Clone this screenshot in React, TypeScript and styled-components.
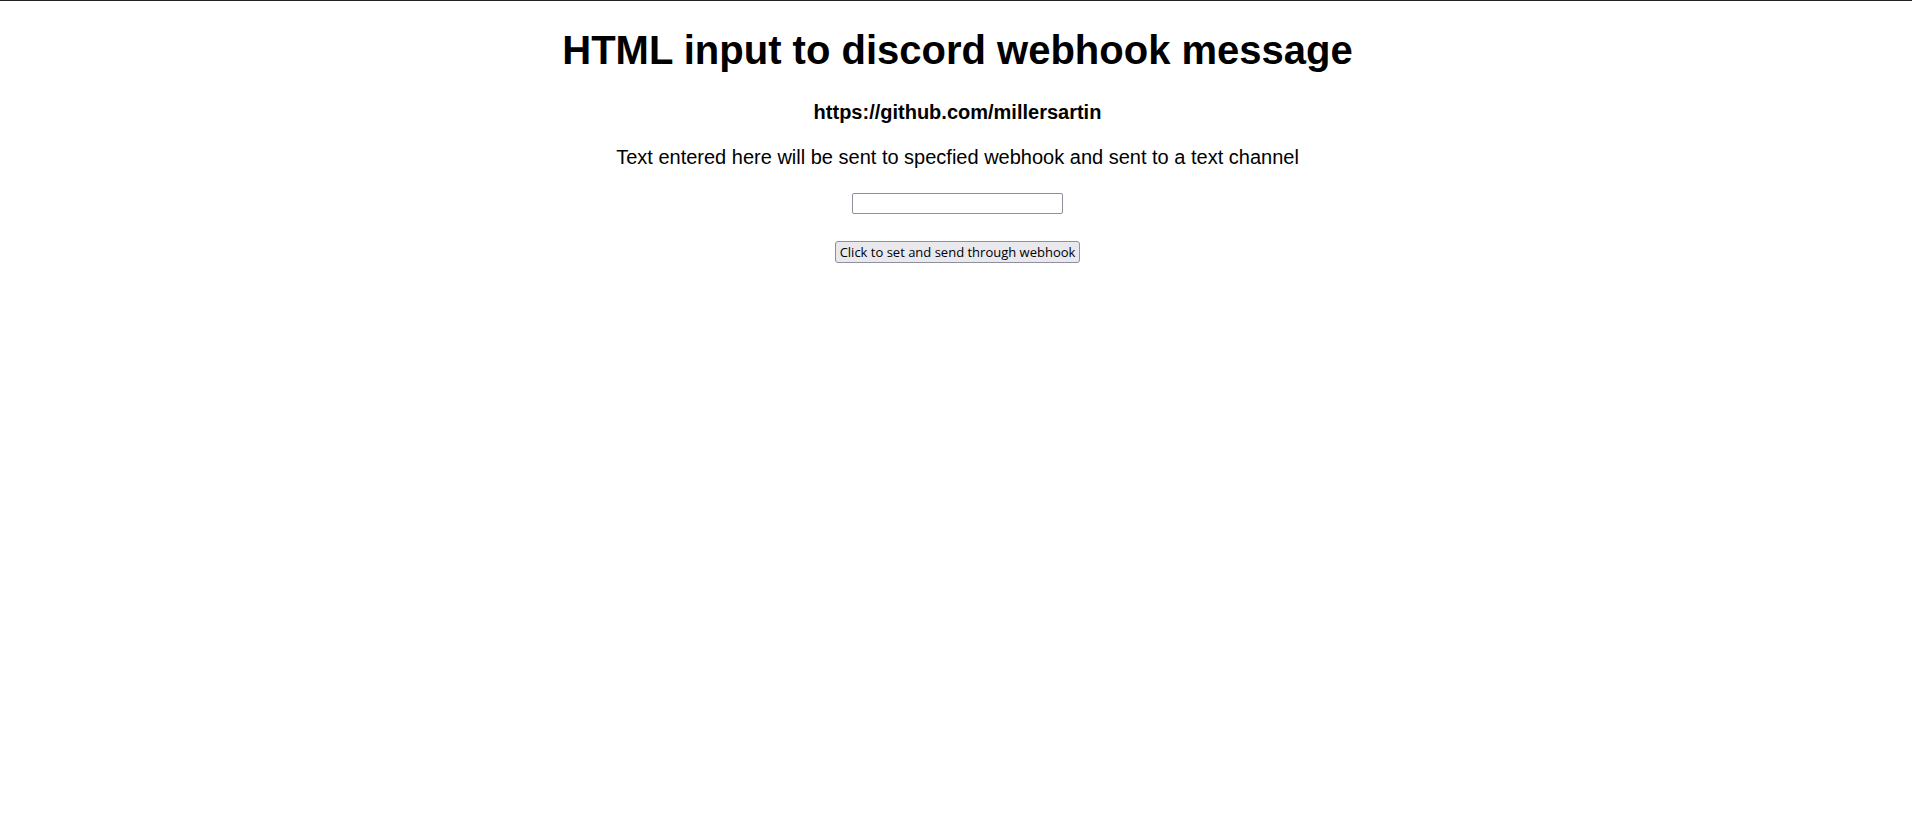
import React, { useState } from "react";
import styled, { createGlobalStyle } from "styled-components";

const GlobalStyle = createGlobalStyle`
  html, body { margin: 0; padding: 0; background: #ffffff; }
  body { font-family: "Liberation Sans", Arial, sans-serif; color: #000; }
`;

const Page = styled.main`
  border-top: 1px solid #222222;
  padding-left: 3px;
  text-align: center;
  display: flex;
  flex-direction: column;
  align-items: center;
`;

const Title = styled.h1`
  font-size: 40px;
  font-weight: bold;
  margin: 26px 0 28px;
  line-height: 46px;
`;

const Subtitle = styled.h3`
  font-size: 20px;
  font-weight: bold;
  line-height: 23px;
  margin: 0 0 22px;
`;

const Description = styled.p`
  font-size: 20px;
  line-height: 23px;
  margin: 0 0 24px;
`;

const Field = styled.input`
  width: 211px;
  height: 21px;
  box-sizing: border-box;
  border: 1px solid #8f8f9d;
  border-radius: 2px;
  padding: 1px 2px;
  font-family: "DejaVu Sans", sans-serif;
  font-size: 13.33px;
  margin: 0 0 27px;
`;

const SendButton = styled.button`
  height: 22px;
  box-sizing: border-box;
  border: 1px solid #8f8f9d;
  border-radius: 3px;
  background: #e9e9ed;
  color: #000;
  font-family: "Open Sans", "DejaVu Sans", sans-serif;
  font-size: 13px;
  padding: 0 4px;
  line-height: 18px;
  cursor: pointer;
`;

export default function App() {
  const [text, setText] = useState("");
  return (
    <>
      <GlobalStyle />
      <Page>
        <Title>HTML input to discord webhook message</Title>
        <Subtitle>https://github.com/millersartin</Subtitle>
        <Description>
          Text entered here will be sent to specfied webhook and sent to a text channel
        </Description>
        <Field type="text" value={text} onChange={(e) => setText(e.target.value)} />
        <SendButton type="button">Click to set and send through webhook</SendButton>
      </Page>
    </>
  );
}
